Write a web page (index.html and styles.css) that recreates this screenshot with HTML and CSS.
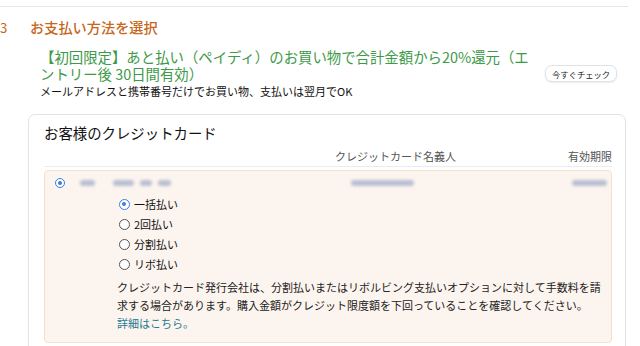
FILE: index.html
```html
<!DOCTYPE html>
<html lang="ja">
<head>
  <meta charset="UTF-8">
  <meta name="viewport" content="width=device-width, initial-scale=1.0">
  <title>お支払い方法を選択</title>
  <link rel="stylesheet" href="styles.css">
</head>
<body>
  <div class="top-rule"></div>

  <div class="step">
    <span class="step-num">3</span>
    <h2>お支払い方法を選択</h2>
  </div>

  <div class="promo">
    <div class="promo-text">
      <p class="promo-title">【初回限定】あと払い（ペイディ）のお買い物で合計金額から20%還元（エントリー後 30日間有効）</p>
      <p class="promo-sub">メールアドレスと携帯番号だけでお買い物、支払いは翌月でOK</p>
    </div>
    <button class="check-btn">今すぐチェック</button>
  </div>

  <div class="card-box">
    <h3>お客様のクレジットカード</h3>
    <div class="col-head">
      <span class="col-name">クレジットカード名義人</span>
      <span class="col-exp">有効期限</span>
    </div>

    <div class="card-row">
      <div class="card-line">
        <span class="radio checked"></span>
        <span class="blur b1"></span>
        <span class="blur b2"></span>
        <span class="blur b3"></span>
        <span class="blur b4"></span>
        <span class="blur b5"></span>
        <span class="blur b6"></span>
      </div>
      <ul class="plans">
        <li><span class="radio checked"></span>一括払い</li>
        <li><span class="radio"></span>2回払い</li>
        <li><span class="radio"></span>分割払い</li>
        <li><span class="radio"></span>リボ払い</li>
      </ul>
      <p class="note">クレジットカード発行会社は、分割払いまたはリボルビング支払いオプションに対して手数料を請求する場合があります。購入金額がクレジット限度額を下回っていることを確認してください。<br><a href="#">詳細はこちら。</a></p>
    </div>
  </div>
</body>
</html>
```

FILE: styles.css
```css
body {
  margin: 0;
  font-family: "Noto Sans CJK JP", "Noto Sans", sans-serif;
  color: #111;
  background: #fff;
  overflow: hidden;
}

p, h2, h3, ul {
  margin: 0;
  padding: 0;
}

.top-rule {
  height: 6px;
  width: 628px;
  border-bottom: 1px solid #e6e6e6;
}

.step {
  display: flex;
  align-items: center;
  gap: 23px;
  margin-top: 10px;
  color: #c8671c;
  height: 20px;
}

.step-num {
  font-size: 13px;
  width: 7px;
}

.step h2 {
  font-size: 14.2px;
  font-weight: 500;
}

.promo {
  display: flex;
  align-items: center;
  margin-top: 11px;
  padding-left: 40px;
}

.promo-text {
  width: 500px;
}

.promo-title {
  color: #3d9a48;
  font-size: 14.4px;
  line-height: 17px;
}

.promo-sub {
  font-size: 11px;
  line-height: 16px;
  margin-top: 1px;
}

.check-btn {
  margin-left: 5px;
  height: 17px;
  padding: 0 6px;
  font-family: inherit;
  font-size: 8.3px;
  color: #222;
  background: #fff;
  border: 1px solid #e2e2e2;
  border-radius: 7px;
  box-shadow: 0 1px 2px rgba(0,0,0,0.08);
}

.card-box {
  margin: 15px 0 0 28px;
  width: 568px;
  padding: 8px 13px 20px 15px;
  border: 1px solid #e3e3e3;
  border-radius: 7px;
}

.card-box h3 {
  font-size: 14.4px;
  font-weight: normal;
  line-height: 20px;
}

.col-head {
  display: flex;
  font-size: 11px;
  line-height: 16px;
  color: #555;
  margin-top: 5px;
  padding-bottom: 2px;
  border-bottom: 1px solid #e9edf1;
}

.col-name {
  margin-left: 291px;
}

.col-exp {
  margin-left: auto;
}

.card-row {
  margin-top: 3px;
  background: #fcf4ee;
  border: 1px solid #f6dfcc;
  border-radius: 4px;
  padding: 4px 4px 10px 10px;
}

.card-line {
  display: flex;
  align-items: center;
  height: 16px;
}

.radio {
  display: inline-block;
  box-sizing: border-box;
  width: 10px;
  height: 10px;
  border: 1px solid #555;
  border-radius: 50%;
  background: #fff;
  position: relative;
  flex-shrink: 0;
}

.radio.checked {
  border: 1.5px solid #3a7fdc;
}

.radio.checked::after {
  content: "";
  position: absolute;
  left: 1.5px;
  top: 1.5px;
  width: 4px;
  height: 4px;
  border-radius: 50%;
  background: #3a7fdc;
}

.blur {
  display: inline-block;
  height: 6px;
  background: #b9bfd3;
  border-radius: 3px;
  filter: blur(1.6px);
}

.b1 { width: 15px; margin-left: 15px; }
.b2 { width: 22px; margin-left: 18px; }
.b3 { width: 12px; margin-left: 6px; }
.b4 { width: 14px; margin-left: 6px; }
.b5 { width: 64px; margin-left: 180px; }
.b6 { width: 36px; margin-left: 158px; }

.plans {
  list-style: none;
  margin: 3px 0 0 64px;
  font-size: 11px;
}

.plans li {
  display: flex;
  align-items: center;
  gap: 4px;
  height: 20px;
}

.plans .radio {
  width: 11px;
  height: 11px;
}

.plans .radio.checked::after {
  left: 2px;
  top: 2px;
}

.note {
  margin: 4px 0 0 62px;
  font-size: 11px;
  line-height: 18px;
  color: #222;
}

.note a {
  color: #1c7c93;
  text-decoration: none;
}
```
